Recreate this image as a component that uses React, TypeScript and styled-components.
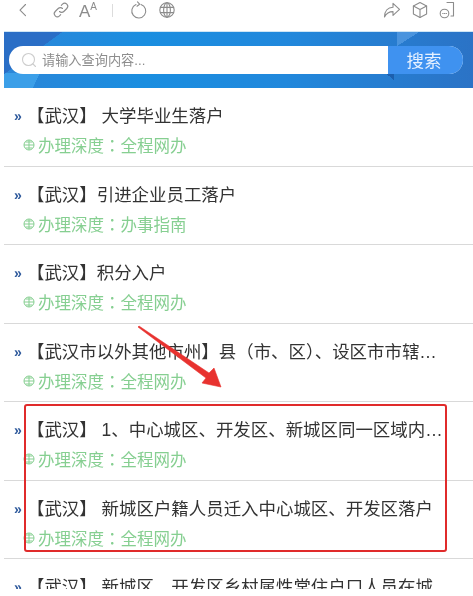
/**
 * Mobile service search list with an annotation on top
 */

import styled, { createGlobalStyle } from "styled-components";

const GlobalStyle = createGlobalStyle`
  html, body {
    margin: 0;
    padding: 0;
    background: #fff;
  }
  body {
    font-family: "Liberation Sans", "Noto Sans CJK SC", sans-serif;
  }
`;

const items = [
  { title: "【武汉】 大学毕业生落户", depth: "全程网办" },
  { title: "【武汉】引进企业员工落户", depth: "办事指南" },
  { title: "【武汉】积分入户", depth: "全程网办" },
  { title: "【武汉市以外其他市州】县（市、区）、设区市市辖区落户办理", depth: "全程网办" },
  { title: "【武汉】 1、中心城区、开发区、新城区同一区域内迁移户口办理", depth: "全程网办" },
  { title: "【武汉】 新城区户籍人员迁入中心城区、开发区落户", depth: "全程网办" },
  { title: "【武汉】 新城区、开发区乡村属性常住户口人员在城镇落户办理", depth: "全程网办" },
];

const Page = styled.div`
  position: relative;
  width: 473px;
  height: 596px;
  overflow: hidden;
  background: #fff;
  filter: blur(0.35px);
`;

const Toolbar = styled.div`
  height: 31px;
  box-sizing: border-box;
  padding: 1px 17px 0 18px;
  display: flex;
  justify-content: space-between;
  align-items: flex-start;
`;

const ToolGroup = styled.div`
  display: flex;
  align-items: center;
  height: 18px;
`;

const ToolIcon = styled.svg<{ $gap?: number }>`
  width: 18px;
  height: 18px;
  margin-left: ${(p) => p.$gap ?? 0}px;
  fill: none;
  stroke: #8c8c8c;
  stroke-width: 1.1;
  stroke-linecap: round;
  stroke-linejoin: round;
  flex: none;
`;

const FontSizeIcon = styled.span`
  margin-left: 9px;
  width: 20px;
  height: 18px;
  flex: none;
  display: flex;
  align-items: flex-start;
  color: #8c8c8c;
  font-family: "Liberation Sans", sans-serif;
  font-size: 17px;
  line-height: 21px;
  small {
    font-size: 10px;
    line-height: 11px;
  }
`;

const ToolDivider = styled.span`
  width: 1px;
  height: 13px;
  margin-left: 13px;
  background: #dcdcdc;
  flex: none;
`;

const Banner = styled.div`
  height: 57px;
  margin-left: 4px;
  box-sizing: border-box;
  padding: 14px 10px 15px 5px;
  border-top: 1px solid #cfe6f5;
  background:
    linear-gradient(to bottom right, #2a6ec6 50%, transparent 50.5%) 0 0 / 58px 42px no-repeat,
    linear-gradient(115deg, #3c9fe8 70%, transparent 70.5%) 0 100% / 44px 15px no-repeat,
    linear-gradient(to bottom right, #4a94de 50%, transparent 50.5%) 393px 0 / 22px 14px no-repeat,
    linear-gradient(to top right, transparent 50%, #1c5fae 50.5%) 381px 41px / 9px 7px no-repeat,
    linear-gradient(90deg, #2c86d8 0%, #1a8ee0 30%, #2188dc 60%, #2b73c6 100%);
`;

const SearchBar = styled.div`
  height: 27.5px;
  display: flex;
  border-radius: 14px;
  overflow: hidden;
  background: #fff;
`;

const SearchField = styled.div`
  flex: 1;
  display: flex;
  align-items: center;
  gap: 5px;
  padding-left: 12px;
  color: #8d8d8d;
  font-size: 13.2px;
`;

const SearchIcon = styled.svg`
  width: 16px;
  height: 16px;
  fill: none;
  stroke: #cdcdcd;
  stroke-width: 1.1;
  stroke-linecap: round;
`;

const SearchButton = styled.div`
  width: 75px;
  display: flex;
  align-items: center;
  justify-content: center;
  padding-right: 3px;
  box-sizing: border-box;
  background: #3f92f0;
  color: #e6f1ff;
  font-size: 17.5px;
`;

const List = styled.div`
  height: 501px;
  overflow: hidden;
  margin-left: 4px;
`;

const Row = styled.div`
  height: 78.5px;
  box-sizing: border-box;
  border-bottom: 1px solid #d9d9d9;
  padding: 13px 21px 0 10px;
`;

const TitleLine = styled.div`
  display: flex;
  align-items: center;
  height: 30px;
`;

const Chevrons = styled.span`
  flex: none;
  width: 13px;
  color: #2f5a9c;
  font-family: "Liberation Sans", sans-serif;
  font-size: 14px;
  font-weight: bold;
  line-height: 30px;
`;

const Title = styled.span`
  flex: 1;
  min-width: 0;
  color: #333;
  font-size: 17.45px;
  line-height: 30px;
  white-space: pre;
  overflow: hidden;
  text-overflow: ellipsis;
`;

const DepthLine = styled.div`
  display: flex;
  align-items: center;
  gap: 3px;
  height: 30px;
  margin-top: -1px;
  padding-left: 9px;
  color: #86cf91;
  font-size: 16.5px;
`;

const DepthColon = styled.span`
  font-family: "Noto Sans CJK TC", sans-serif;
`;

const DepthIcon = styled.svg`
  width: 12px;
  height: 12px;
  fill: none;
  stroke: #86cf91;
  stroke-width: 1;
  flex: none;
`;

const MarkBox = styled.div`
  position: absolute;
  left: 24px;
  top: 404px;
  width: 423px;
  height: 148px;
  box-sizing: border-box;
  border: 2px solid #e02b2b;
  border-radius: 3px;
`;

const MarkArrow = styled.svg`
  position: absolute;
  left: 130px;
  top: 320px;
  width: 100px;
  height: 75px;
`;

export default function App() {
  return (
    <Page>
      <GlobalStyle />
      <Toolbar>
        <ToolGroup>
          <ToolIcon viewBox="0 0 18 18">
            <path d="M7.5 3.5 2 9.2l5.5 5.5" />
          </ToolIcon>
          <ToolIcon viewBox="0 0 18 18" $gap={16}>
            <path d="M7.5 10.5a3 3 0 0 0 4.3 0l3-3a3 3 0 0 0-4.3-4.3L9.3 4.4" />
            <path d="M10.5 7.5a3 3 0 0 0-4.3 0l-3 3a3 3 0 0 0 4.3 4.3l1.2-1.2" />
          </ToolIcon>
          <FontSizeIcon>
            A<small>A</small>
          </FontSizeIcon>
          <ToolDivider />
          <ToolIcon viewBox="0 0 18 18" $gap={17}>
            <path d="M6 3.6A7 7 0 1 0 11 3.4" />
            <path d="M7.5 0.8 9.6 3.2 7 5.2" />
          </ToolIcon>
          <ToolIcon viewBox="0 0 18 18" $gap={10}>
            <circle cx="9" cy="9" r="7.2" />
            <ellipse cx="9" cy="9" rx="3.4" ry="7.2" />
            <path d="M2.4 6.4h13.2M2.4 11.6h13.2M9 1.8v14.4" />
          </ToolIcon>
        </ToolGroup>
        <ToolGroup>
          <ToolIcon viewBox="0 0 18 18">
            <path d="M1.5 16C1.5 10 5 6.5 10 6.2V2.4l6.5 6-6.5 6v-3.8c-3.6 0-6.6 1.5-8.5 5.4Z" />
          </ToolIcon>
          <ToolIcon viewBox="0 0 18 18" $gap={10}>
            <path d="M9 1.6 15.6 5v8L9 16.4 2.4 13V5Z" />
            <path d="M2.4 5 9 8.6 15.6 5M9 8.6v7.8" />
          </ToolIcon>
          <ToolIcon viewBox="0 0 18 18" $gap={9}>
            <path d="M9 1.5h6.5v13.5H13" />
            <circle cx="6.5" cy="12.5" r="4.3" />
            <path d="M4.7 12.5h.4M6.4 12.5h.4M8.1 12.5h.4" />
          </ToolIcon>
        </ToolGroup>
      </Toolbar>
      <Banner>
        <SearchBar>
          <SearchField>
            <SearchIcon viewBox="0 0 16 16">
              <circle cx="7.5" cy="7.5" r="6" />
              <path d="m12 12 2.5 2.5" />
            </SearchIcon>
            请输入查询内容...
          </SearchField>
          <SearchButton>搜索</SearchButton>
        </SearchBar>
      </Banner>
      <List>
        {items.map((item) => (
          <Row key={item.title}>
            <TitleLine>
              <Chevrons>»</Chevrons>
              <Title>{item.title}</Title>
            </TitleLine>
            <DepthLine>
              <DepthIcon viewBox="0 0 12 12">
                <circle cx="6" cy="6" r="5" />
                <path d="M1 6h10M6 1v10M2.5 3h7M2.5 9h7" />
              </DepthIcon>
              <span>
                办理深度<DepthColon>：</DepthColon>
                {item.depth}
              </span>
            </DepthLine>
          </Row>
        ))}
      </List>
      <MarkBox />
      <MarkArrow viewBox="0 0 100 75">
        <path d="M8 7 L76 58 L72 63 L91 67 L84 48 L79 53 L9 6 Z" fill="#e8322f" stroke="#e8322f" strokeWidth="0.6" />
      </MarkArrow>
    </Page>
  );
}
